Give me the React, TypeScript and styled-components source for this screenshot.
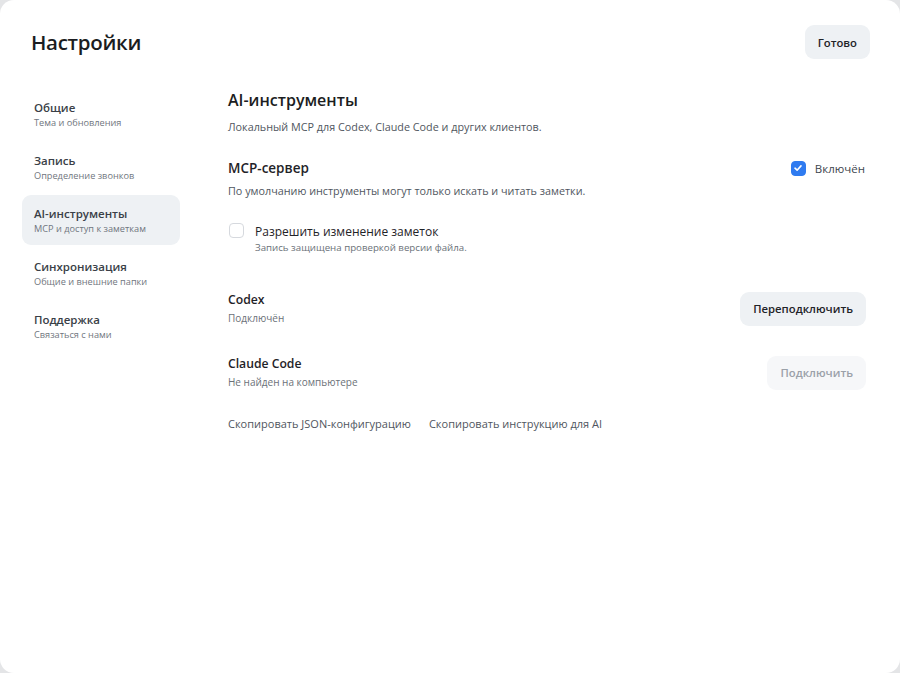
import React, { useState } from 'react';
import styled, { createGlobalStyle } from 'styled-components';

const GlobalStyle = createGlobalStyle`
  html, body {
    margin: 0;
    padding: 0;
    background: #e4e5e7;
  }
  body {
    font-family: 'Open Sans', 'Noto Sans', sans-serif;
    color: #1f2328;
  }
  * {
    box-sizing: border-box;
  }
`;

const Window = styled.div`
  width: 900px;
  height: 673px;
  background: #ffffff;
  border-radius: 14px;
  display: flex;
  flex-direction: column;
  overflow: hidden;
`;

const Header = styled.header`
  display: flex;
  justify-content: space-between;
  align-items: center;
  padding: 25px 30px 0 31px;
  height: 59px;
`;

const Title = styled.h1`
  margin: 0;
  font-size: 20.5px;
  font-weight: 600;
  letter-spacing: -0.3px;
  color: #1b1d21;
`;

const Button = styled.button<{ disabled?: boolean }>`
  height: 34px;
  padding: 0 13px;
  border: none;
  border-radius: 9px;
  background: ${(p) => (p.disabled ? '#f6f7f9' : '#eef1f4')};
  color: ${(p) => (p.disabled ? '#9ba1a9' : '#1f2328')};
  font-family: inherit;
  font-size: 11.3px;
  font-weight: 600;
  cursor: ${(p) => (p.disabled ? 'default' : 'pointer')};
`;

const Body = styled.div`
  display: flex;
  gap: 48px;
  padding: 30px 34px 0 22px;
`;

const Sidebar = styled.nav`
  width: 158px;
  display: flex;
  flex-direction: column;
  gap: 3px;
`;

const NavItem = styled.div<{ active?: boolean }>`
  height: 50px;
  padding: 3px 12px 0;
  border-radius: 9px;
  background: ${(p) => (p.active ? '#eef1f4' : 'transparent')};
  display: flex;
  flex-direction: column;
  justify-content: center;
  cursor: pointer;
`;

const NavTitle = styled.div`
  font-size: 11.5px;
  font-weight: 600;
  color: #3a3f47;
  line-height: 17px;
`;

const NavSub = styled.div`
  font-size: 9.2px;
  color: #70767e;
  line-height: 14px;
  margin-bottom: 3px;
`;

const Content = styled.main`
  flex: 1;
  display: flex;
  flex-direction: column;
`;

const SectionTitle = styled.h2`
  margin: 0;
  font-size: 16px;
  font-weight: 600;
  color: #1b1d21;
  line-height: 22px;
`;

const Lead = styled.p`
  margin: 8px 0 0;
  font-size: 10.8px;
  color: #50565e;
  line-height: 16px;
`;

const Row = styled.div<{ mt: number }>`
  display: flex;
  justify-content: space-between;
  align-items: center;
  margin-top: ${(p) => p.mt}px;
`;

const RowTitle = styled.div<{ large?: boolean }>`
  font-size: ${(p) => (p.large ? '13.5px' : '12.2px')};
  font-weight: 600;
  color: #1f2328;
  line-height: 18px;
`;

const RowSub = styled.div`
  font-size: 10px;
  color: #6b7178;
  line-height: 15px;
  margin-top: 2px;
`;

const Desc = styled.p`
  margin: 6px 0 0;
  font-size: 10.8px;
  color: #50565e;
  line-height: 16px;
`;

const Box = styled.span<{ checked?: boolean }>`
  width: 15px;
  height: 15px;
  flex: none;
  border-radius: 4px;
  background: ${(p) => (p.checked ? '#2f7bf0' : '#ffffff')};
  border: 1px solid ${(p) => (p.checked ? '#2f7bf0' : '#d6d9de')};
  display: inline-flex;
  align-items: center;
  justify-content: center;
`;

const ToggleLabel = styled.label`
  display: flex;
  align-items: center;
  gap: 9px;
  font-size: 11.5px;
  color: #40464e;
  cursor: pointer;
  margin-right: 1px;
`;

const Option = styled.div`
  display: flex;
  gap: 11px;
  margin-top: 24px;
  padding-left: 1px;
`;

const OptionTitle = styled.div`
  font-size: 12px;
  font-weight: 500;
  color: #1f2328;
  line-height: 17px;
`;

const OptionSub = styled.div`
  font-size: 9.7px;
  color: #6b7178;
  line-height: 14px;
  margin-top: 1px;
`;

const Links = styled.div`
  display: flex;
  gap: 18px;
  margin-top: 26px;
`;

const LinkButton = styled.a`
  font-size: 11px;
  color: #50565e;
  cursor: pointer;
`;

const Check = () => (
  <svg width="10" height="10" viewBox="0 0 10 10" fill="none">
    <path d="M2 5.2 L4.1 7.2 L8 2.9" stroke="#fff" strokeWidth="1.6" strokeLinecap="round" strokeLinejoin="round" />
  </svg>
);

const nav = [
  { title: 'Общие', sub: 'Тема и обновления' },
  { title: 'Запись', sub: 'Определение звонков' },
  { title: 'AI-инструменты', sub: 'MCP и доступ к заметкам' },
  { title: 'Синхронизация', sub: 'Общие и внешние папки' },
  { title: 'Поддержка', sub: 'Связаться с нами' },
];

const App: React.FC = () => {
  const [active, setActive] = useState(2);
  const [enabled, setEnabled] = useState(true);
  const [allowEdit, setAllowEdit] = useState(false);

  return (
    <>
      <GlobalStyle />
      <Window>
        <Header>
          <Title>Настройки</Title>
          <Button>Готово</Button>
        </Header>
        <Body>
          <Sidebar>
            {nav.map((item, i) => (
              <NavItem key={item.title} active={i === active} onClick={() => setActive(i)}>
                <NavTitle>{item.title}</NavTitle>
                <NavSub>{item.sub}</NavSub>
              </NavItem>
            ))}
          </Sidebar>
          <Content>
            <SectionTitle>AI-инструменты</SectionTitle>
            <Lead>Локальный MCP для Codex, Claude Code и других клиентов.</Lead>

            <Row mt={24}>
              <RowTitle large>MCP-сервер</RowTitle>
              <ToggleLabel onClick={() => setEnabled(!enabled)}>
                <Box checked={enabled}>{enabled && <Check />}</Box>
                Включён
              </ToggleLabel>
            </Row>
            <Desc>По умолчанию инструменты могут только искать и читать заметки.</Desc>

            <Option>
              <Box checked={allowEdit} onClick={() => setAllowEdit(!allowEdit)}>
                {allowEdit && <Check />}
              </Box>
              <div>
                <OptionTitle>Разрешить изменение заметок</OptionTitle>
                <OptionSub>Запись защищена проверкой версии файла.</OptionSub>
              </div>
            </Option>

            <Row mt={36}>
              <div>
                <RowTitle>Codex</RowTitle>
                <RowSub>Подключён</RowSub>
              </div>
              <Button>Переподключить</Button>
            </Row>

            <Row mt={29}>
              <div>
                <RowTitle>Claude Code</RowTitle>
                <RowSub>Не найден на компьютере</RowSub>
              </div>
              <Button disabled>Подключить</Button>
            </Row>

            <Links>
              <LinkButton>Скопировать JSON-конфигурацию</LinkButton>
              <LinkButton>Скопировать инструкцию для AI</LinkButton>
            </Links>
          </Content>
        </Body>
      </Window>
    </>
  );
};

export default App;
